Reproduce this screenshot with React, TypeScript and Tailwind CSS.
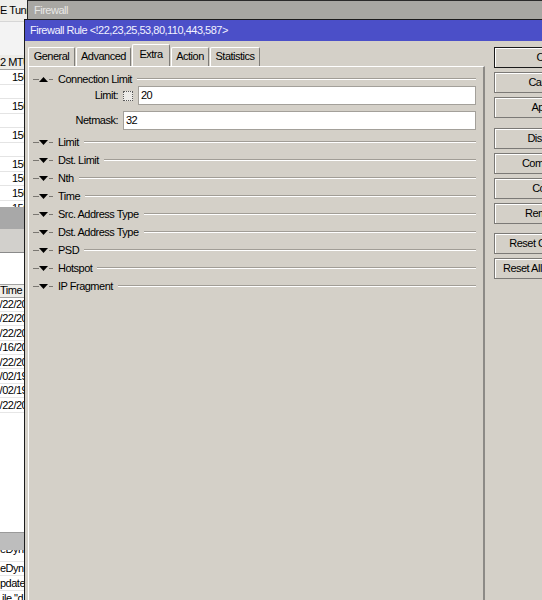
import React from "react";

function Tri({ up }: { up?: boolean }) {
  return (
    <svg width="9" height="5" viewBox="0 0 9 5" className="shrink-0">
      {up ? <path d="M0 5 L4.5 0 L9 5 Z" fill="#000" /> : <path d="M0 0 L9 0 L4.5 5 Z" fill="#000" />}
    </svg>
  );
}

function SectionHeader({ label, up }: { label: string; up?: boolean }) {
  return (
    <div className="flex items-center h-[18px] pl-[4px] pr-[7px]">
      <div className="w-[6px] h-px bg-[#7a7772] shrink-0" />
      <Tri up={up} />
      <div className="w-[4px] h-px bg-[#7a7772] ml-[1px] shrink-0" />
      <span className="ml-[5px] whitespace-nowrap">{label}</span>
      <div className="flex-1 ml-[5px] border-t border-t-[#a19d96] border-b border-b-white" />
    </div>
  );
}

function Btn({ label, def }: { label: string; def?: boolean }) {
  return (
    <div
      className={
        "w-[100px] h-[21px] shrink-0 flex items-center justify-center whitespace-nowrap border shadow-[inset_1px_1px_0_#ffffff] " +
        (def ? "border-[#1a1a1a]" : "border-[#7b7976]")
      }
    >
      {label}
    </div>
  );
}

function Tab({ label, active, w }: { label: string; active?: boolean; w: string }) {
  return (
    <div
      className={
        "flex items-center justify-center border-t border-l border-t-white border-l-white border-r border-r-[#7f7d79] rounded-t-[2px] " +
        w +
        (active ? " h-[22px] pb-[2px] bg-[#d4d0c8]" : " h-[19px] pb-[1px]")
      }
    >
      {label}
    </div>
  );
}

const mtuRows = ["1500", "", "1500", "", "1500", "", "1500", "1500", "1500"];
const dates = ["1/22/2012", "1/22/2012", "1/22/2012", "1/16/2012", "1/22/2012", "1/02/1970", "1/02/1970", "1/22/2012"];

export default function App() {
  return (
    <div className="relative w-[542px] h-[600px] overflow-hidden bg-[#d4d0c8] text-[11px] tracking-[-0.5px] text-black font-['Liberation_Sans',Arial,sans-serif]">
      {/* background window strip */}
      <div className="absolute left-0 top-0 w-[28px] h-[600px] bg-white overflow-hidden flex flex-col">
        <div className="h-[21px] shrink-0 bg-[#efeeeb] flex items-center whitespace-nowrap">E Tunnel</div>
        <div className="h-[34px] shrink-0 bg-[#f3f3f3] border-t border-[#d6d6d6]" />
        <div className="h-[15px] shrink-0 bg-[#ecebe7] border-b border-[#a3a3a3] flex items-center whitespace-nowrap">2 MTU</div>
        {mtuRows.map((t, i) => (
          <div key={i} className="h-[14.5px] shrink-0 border-b border-[#e4e4e4] flex items-center pl-[12px] whitespace-nowrap">
            {t}
          </div>
        ))}
        <div className="h-[6px] shrink-0 overflow-hidden">
          <div className="h-[14.5px] flex items-center pl-[12px] whitespace-nowrap">1500</div>
        </div>
        <div className="h-[22px] shrink-0 bg-[#a8a8a8]" />
        <div className="h-[24px] shrink-0 bg-[#d2d0cc] border-b border-[#8a8a8a]" />
        <div className="h-[31px] shrink-0 bg-white" />
        <div className="h-[14px] shrink-0 bg-[#efeeea] border-y border-[#a3a3a3] flex items-center whitespace-nowrap">Time S</div>
        {dates.map((d, i) => (
          <div key={i} className="h-[14.4px] shrink-0 border-b border-[#e6e6e6] flex items-center whitespace-nowrap -ml-[6px]">
            {d}
          </div>
        ))}
        <div className="h-[119px] shrink-0 bg-white" />
        <div className="h-[18px] shrink-0 bg-[#bdbdbd] border-t border-[#9a9a9a]" />
        <div className="h-[12px] shrink-0 overflow-hidden border-b border-[#e6e6e6]">
          <div className="-mt-[8px] h-[15px] flex items-center whitespace-nowrap">eDynR</div>
        </div>
        <div className="h-[14.5px] shrink-0 flex items-center whitespace-nowrap border-b border-[#e6e6e6]">eDynDNS</div>
        <div className="h-[14.5px] shrink-0 flex items-center whitespace-nowrap border-b border-[#e6e6e6]">pdate</div>
        <div className="h-[14.5px] shrink-0 flex items-center whitespace-nowrap pl-[2px]">ile "d</div>
      </div>

      {/* Firewall window (behind) */}
      <div className="absolute left-[27px] top-0 w-[600px] h-[40px] border-t border-l border-[#2a2a2a] bg-[#a8a7a3]">
        <div className="h-[19px] flex items-center pl-[6px] text-[#e8e8e6]">Firewall</div>
      </div>

      {/* Firewall Rule dialog */}
      <div className="absolute left-[24px] top-[19px] w-[620px] h-[700px] border border-[#1c1c1c] bg-[#d4d0c8] flex flex-col">
        <div className="h-[21px] shrink-0 bg-[#4b4fc8] text-[#f2f2ff] flex items-center pl-[5px] whitespace-nowrap">
          Firewall Rule &lt;!22,23,25,53,80,110,443,587&gt;
        </div>
        <div className="flex flex-1 pl-[3px] pt-[3px]">
          {/* left column: tabs + panel */}
          <div className="w-[457px] flex flex-col shrink-0">
            <div className="flex items-end h-[22px] gap-[1px]">
              <Tab label="General" w="w-[47px]" />
              <Tab label="Advanced" w="w-[55px]" />
              <Tab label="Extra" w="w-[38px]" active />
              <Tab label="Action" w="w-[38px]" />
              <Tab label="Statistics" w="w-[50px]" />
            </div>
            <div className="flex-1 border-t border-l border-t-white border-l-white border-r-2 border-r-[#8c8a86] pt-[3px]">
              <SectionHeader label="Connection Limit" up />
              <div className="flex items-center h-[19px] -mt-[2px] pr-[7px]">
                <div className="w-[89px] shrink-0 text-right">Limit:</div>
                <div className="ml-[5px] w-[10px] h-[10px] shrink-0 border border-dotted border-[#5a5a5a] bg-[#ecebe8]" />
                <div className="ml-[5px] flex-1 h-[19px] bg-white border border-[#a3a09a] flex items-center pl-[2px]">20</div>
              </div>
              <div className="flex items-center h-[19px] mt-[6px] pr-[7px]">
                <div className="w-[89px] shrink-0 text-right">Netmask:</div>
                <div className="ml-[5px] flex-1 h-[19px] bg-white border border-[#a3a09a] flex items-center pl-[2px]">32</div>
              </div>
              <div className="mt-[3px]">
                <SectionHeader label="Limit" />
                <SectionHeader label="Dst. Limit" />
                <SectionHeader label="Nth" />
                <SectionHeader label="Time" />
                <SectionHeader label="Src. Address Type" />
                <SectionHeader label="Dst. Address Type" />
                <SectionHeader label="PSD" />
                <SectionHeader label="Hotspot" />
                <SectionHeader label="IP Fragment" />
              </div>
            </div>
          </div>
          {/* buttons */}
          <div className="ml-[9px] pt-[3px] flex flex-col gap-[4px]">
            <Btn label="OK" def />
            <Btn label="Cancel" />
            <Btn label="Apply" />
            <div className="h-[2px] shrink-0" />
            <Btn label="Disable" />
            <Btn label="Comment" />
            <Btn label="Copy" />
            <Btn label="Remove" />
            <div className="h-[1px] shrink-0" />
            <Btn label="Reset Counters" />
            <Btn label="Reset All Counters" />
          </div>
        </div>
      </div>
    </div>
  );
}
